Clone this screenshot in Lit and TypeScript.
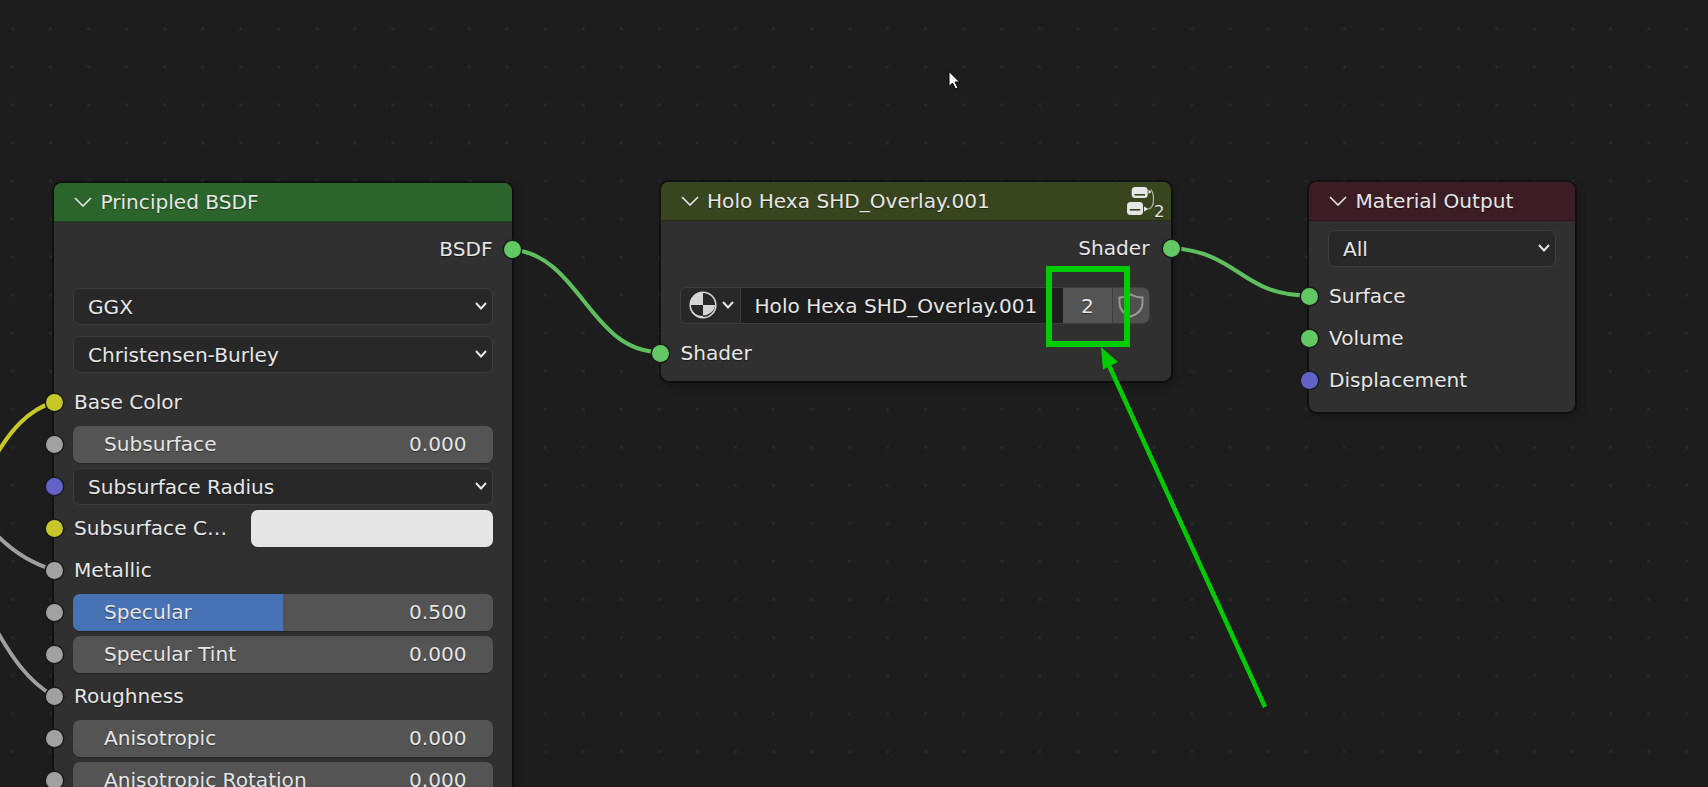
import { LitElement, css, html, svg } from 'lit';
import { customElement } from 'lit/decorators.js';
import { styleMap } from 'lit/directives/style-map.js';

const GREEN = '#63c763';
const YELLOW = '#c7c729';
const GRAY = '#a1a1a1';
const PURPLE = '#6363c7';

const slider = ( label: string, value: string, socket: string, fill = 0, cls = '' ) =>
   ( { kind: 'slider', label, value, socket, fill, cls } );
const select = ( label: string, socket = '', cls = '' ) =>
   ( { kind: 'select', label, socket, cls } );
const input = ( label: string, socket: string, cls = '' ) =>
   ( { kind: 'input', label, socket, cls } );
const output = ( label: string, socket: string, cls = '' ) =>
   ( { kind: 'output', label, socket, cls } );

const PRINCIPLED = [
   output( 'BSDF', GREEN, 'gap-l' ),
   select( 'GGX', '', 'gap-m' ),
   select( 'Christensen-Burley', '', 'gap-m' ),
   input( 'Base Color', YELLOW ),
   slider( 'Subsurface', '0.000', GRAY ),
   select( 'Subsurface Radius', PURPLE ),
   { kind: 'color', label: 'Subsurface C…', socket: YELLOW, cls: '' },
   input( 'Metallic', GRAY ),
   slider( 'Specular', '0.500', GRAY, 50 ),
   slider( 'Specular Tint', '0.000', GRAY ),
   input( 'Roughness', GRAY ),
   slider( 'Anisotropic', '0.000', GRAY ),
   slider( 'Anisotropic Rotation', '0.000', GRAY ),
];

const OUTPUT = [
   select( 'All', '', 'gap-m' ),
   input( 'Surface', GREEN ),
   input( 'Volume', GREEN ),
   input( 'Displacement', PURPLE ),
];

const chevron = () => html`
   <svg class="chev" viewBox="0 0 18 10"><path d="M1 1 L9 9 L17 1" /></svg>
`;

const smallChevron = () => html`
   <svg class="chev-s" viewBox="0 0 12 8"><path d="M1 1 L6 6.5 L11 1" /></svg>
`;

// grid dots, links between the sockets
const canvasLayer = () => html`
   <svg class="layer" width="1708" height="787">
      <defs>
         <pattern id="dots" x="11" y="179.5" width="38.05" height="38.05" patternUnits="userSpaceOnUse">
            <rect width="3" height="3" fill="#282828" />
         </pattern>
      </defs>
      <rect width="1708" height="787" fill="url(#dots)" />
      <g fill="none" stroke-width="4" stroke-linecap="round">
         <path d="M-8 462 C10 430 28 410 54 402" stroke=${ YELLOW } />
         <path d="M-8 530 C10 550 30 563 54 570" stroke="#a0a0a0" />
         <path d="M-8 622 C10 655 28 682 54 696" stroke="#a0a0a0" />
         <path d="M512 249.5 C580 255 590 352 660 352" stroke="#5fbf5f" />
         <path d="M1171 248 C1240 252 1240 295.5 1309 295.5" stroke="#5fbf5f" />
      </g>
   </svg>
`;

// the green marker and arrow painted on the screenshot, and the mouse pointer
const annotationLayer = () => html`
   <svg class="layer" width="1708" height="787">
      <rect x="1049" y="269" width="78" height="75" fill="none" stroke="#00cc00" stroke-width="6" />
      <path d="M1265 707 L1107 361" stroke="#00cc00" stroke-width="4.5" fill="none" />
      <path d="M1101 347 L1103 369.5 L1118 362 Z" fill="#00cc00" />
      <path d="M949 71.5 L959.5 82 L955 82 L958 88 L955.5 89 L952.5 83 L949 86.5 Z"
         fill="#fff" stroke="#000" stroke-width="1" />
   </svg>
`;

const groupIcon = () => svg`
   <svg class="group-icon" width="40" height="32" viewBox="0 0 40 32">
      <rect x="4.7" y="1" width="16" height="11" rx="3.5" fill="#e6e6e6" />
      <rect x="7.5" y="8" width="10.5" height="1.6" fill="#38451f" />
      <rect x="0" y="16" width="16" height="13" rx="3.5" fill="#e6e6e6" />
      <rect x="2.8" y="23" width="10.5" height="1.6" fill="#38451f" />
      <path d="M21.5 3.5 L24.5 6 L21.5 8 Z" fill="#e6e6e6" />
      <path d="M17 20.5 L21.5 23 L17 25.5 Z" fill="#e6e6e6" />
      <path d="M24 3.5 C26 6 26.5 10 26.5 14 C26.5 19 25 22 21.5 23" fill="none" stroke="#b4bba8" stroke-width="1.2" />
   </svg>
`;

const materialIcon = () => svg`
   <svg class="mat-icon" width="28" height="28" viewBox="0 0 28 28">
      <circle cx="14" cy="14" r="12.8" fill="#282828" stroke="#d6d6d6" stroke-width="1.6" />
      <path d="M14 14 L14 1 A13 13 0 0 0 1 14 Z" fill="#d6d6d6" />
      <path d="M14 14 L26 14 A12.5 11 0 0 1 14 24.5 Z" fill="#d6d6d6" />
      <path d="M2 17 A12.5 12.5 0 0 0 14 27 L14 25 A12 11 0 0 1 2 17 Z" fill="#d6d6d6" />
   </svg>
`;

const shieldIcon = () => svg`
   <svg class="shield" width="26" height="25" viewBox="0 0 26 25">
      <path d="M13 1.5 C16.5 3.6 20.5 4.5 24.5 4.5 L24.5 10 C24.5 16.5 20 21 13 23.5 C6 21 1.5 16.5 1.5 10 L1.5 4.5 C5.5 4.5 9.5 3.6 13 1.5 Z"
         fill="none" stroke="#979797" stroke-width="2" />
   </svg>
`;

@customElement( 'app-root' )
export class AppRoot extends LitElement {
   renderRow( row: any ) {
      const dot = row.socket
         ? html`<span class="socket ${ row.kind === 'output' ? 'right' : '' }" style=${ styleMap( { backgroundColor: row.socket } ) }></span>`
         : '';
      let body: unknown = '';
      if ( row.kind === 'slider' ) {
         body = html`
            <div class="control slider">
               ${ row.fill ? html`<div class="fill" style=${ styleMap( { width: `${ row.fill }%` } ) }></div>` : '' }
               <span class="text">${ row.label }</span>
               <span class="text">${ row.value }</span>
            </div>
         `;
      } else if ( row.kind === 'select' ) {
         body = html`
            <div class="control select">
               <span>${ row.label }</span>
               ${ smallChevron() }
            </div>
         `;
      } else if ( row.kind === 'color' ) {
         body = html`
            <span class="label grow">${ row.label }</span>
            <div class="swatch"></div>
         `;
      } else if ( row.kind === 'output' ) {
         body = html`<span class="label out">${ row.label }</span>`;
      } else {
         body = html`<span class="label">${ row.label }</span>`;
      }
      return html`<div class="row ${ row.cls }">${ dot }${ body }</div>`;
   }

   renderHeader( title: string, cls: string, extra: unknown = '' ) {
      return html`
         <div class="head ${ cls }">
            ${ chevron() }
            <span>${ title }</span>
            ${ extra }
         </div>
      `;
   }

   render() {
      return html`
      ${ canvasLayer() }

      <div class="node principled">
         ${ this.renderHeader( 'Principled BSDF', 'green' ) }
         <div class="body">
            ${ PRINCIPLED.map( row => this.renderRow( row ) ) }
         </div>
      </div>

      <div class="node group">
         ${ this.renderHeader( 'Holo Hexa SHD_Overlay.001', 'olive', html`
            ${ groupIcon() }
            <span class="users">2</span>
         ` ) }
         <div class="body">
            ${ this.renderRow( output( 'Shader', GREEN, 'gap-l' ) ) }
            <div class="row gap-m">
               <div class="idblock">
                  <div class="id-icon">${ materialIcon() }${ smallChevron() }</div>
                  <div class="id-name">Holo Hexa SHD_Overlay.001</div>
                  <div class="id-num">2</div>
                  <div class="id-shield">${ shieldIcon() }</div>
               </div>
            </div>
            ${ this.renderRow( input( 'Shader', GREEN ) ) }
         </div>
      </div>

      <div class="node material">
         ${ this.renderHeader( 'Material Output', 'wine' ) }
         <div class="body">
            ${ OUTPUT.map( row => this.renderRow( row ) ) }
         </div>
      </div>

      ${ annotationLayer() }
    `;
   }

   static styles = css`
  :host {
    display: block;
    position: relative;
    width: 1708px;
    height: 787px;
    overflow: hidden;
    background: #1d1d1d;
    font-family: "DejaVu Sans", sans-serif;
    font-size: 20.1px;
    color: #e6e6e6;
    text-shadow: 0 1px 1px rgba(0,0,0,0.45);
  }
  .layer {
    position: absolute;
    left: 0;
    top: 0;
    pointer-events: none;
  }
  .node {
    position: absolute;
    background: #303030;
    border-radius: 8px;
    box-shadow: 0 0 0 2px rgba(10,10,10,0.55), 3px 4px 8px rgba(0,0,0,0.3);
  }
  .principled { left: 54px; top: 183px; width: 458px; }
  .group { left: 660.5px; top: 182px; width: 510.5px; height: 199px; }
  .material { left: 1309px; top: 182px; width: 266px; height: 230px; }
  .head {
    position: relative;
    display: flex;
    align-items: center;
    gap: 8.5px;
    height: 38px;
    padding-left: 20px;
    border-radius: 8px 8px 0 0;
    border-bottom: 1px solid rgba(0,0,0,0.3);
  }
  .green { background: #2b652b; }
  .olive { background: #38451f; }
  .wine { background: #3c1d26; }
  .chev {
    width: 18px;
    height: 10px;
    flex: none;
  }
  .chev path, .chev-s path {
    fill: none;
    stroke: #e6e6e6;
    stroke-width: 1.6;
  }
  .chev-s {
    width: 12px;
    height: 8px;
    flex: none;
  }
  .chev-s path { stroke-width: 2; }
  .group-icon {
    position: absolute;
    left: 466.5px;
    top: 4px;
  }
  .users {
    position: absolute;
    left: 493.5px;
    top: 20px;
    font-size: 16.5px;
  }
  .body {
    display: flex;
    flex-direction: column;
    padding-top: 6px;
  }
  .row {
    position: relative;
    display: flex;
    align-items: center;
    height: 42px;
    padding: 0 19.5px 0 19px;
    flex: none;
  }
  .group .row { padding-right: 21.5px; }
  .material .row { padding-right: 19px; }
  .select > span, .id-name, .id-num { padding-top: 1px; }
  .gap-l { margin-bottom: 15px; }
  .gap-m { margin-bottom: 6px; }
  .socket {
    position: absolute;
    left: -8.5px;
    top: 12.5px;
    width: 17px;
    height: 17px;
    border-radius: 50%;
    box-shadow: 0 0 0 1.5px #1a1a1a;
  }
  .socket.right {
    left: auto;
    right: -8.5px;
  }
  .group .socket.right { right: -8.5px; }
  .label { padding-left: 1px; }
  .label.out { margin-left: auto; }
  .grow { flex: 1; }
  .control {
    position: relative;
    display: flex;
    align-items: center;
    justify-content: space-between;
    flex: 1;
    height: 37px;
    box-sizing: border-box;
    border-radius: 7px;
    overflow: hidden;
  }
  .select {
    background: #282828;
    border: 1px solid #3d3d3d;
    padding: 0 5px 0 14px;
  }
  .slider {
    background: #545454;
    padding: 0 26px 0 31px;
    box-shadow: 0 1px 1px rgba(0,0,0,0.25);
  }
  .fill {
    position: absolute;
    left: 0;
    top: 0;
    bottom: 0;
    background: #4772b3;
  }
  .text { position: relative; }
  .swatch {
    width: 242px;
    height: 37px;
    border-radius: 7px;
    background: #e6e6e6;
  }
  .idblock {
    display: flex;
    flex: 1;
    height: 37px;
    box-sizing: border-box;
    border-radius: 7px;
    overflow: hidden;
    border: 1px solid #3d3d3d;
  }
  .idblock > div {
    display: flex;
    align-items: center;
    box-sizing: border-box;
  }
  .id-icon {
    width: 60px;
    gap: 5px;
    padding-left: 8px;
    background: #282828;
    border-right: 1px solid #3d3d3d;
  }
  .id-name {
    width: 322.5px;
    padding-left: 14px;
    background: #1d1d1d;
    white-space: nowrap;
  }
  .id-num {
    width: 50px;
    justify-content: center;
    background: #545454;
    border-right: 1px solid #3d3d3d;
  }
  .id-shield {
    flex: 1;
    justify-content: center;
    background: #505050;
  }
  `;
}

declare global {
   interface HTMLElementTagNameMap {
      'app-root': AppRoot;
   }
};
